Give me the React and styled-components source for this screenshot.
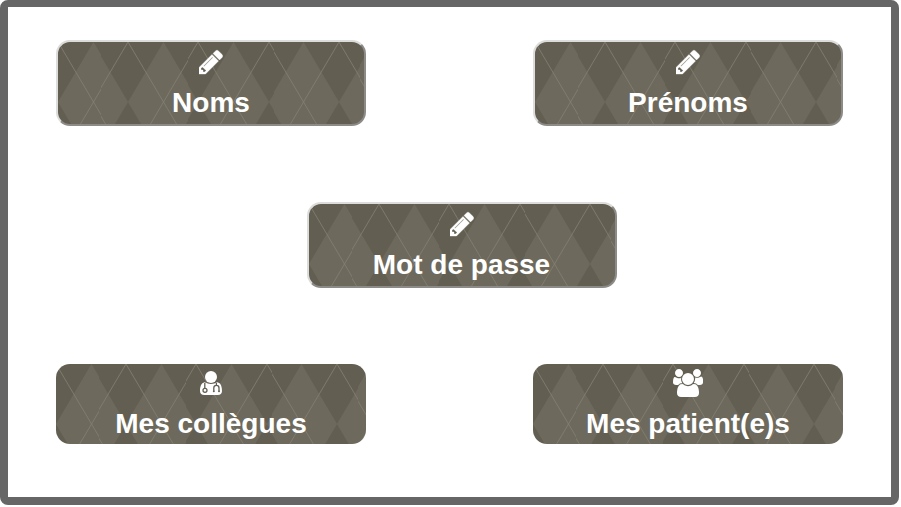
import React from "react";
import styled, { createGlobalStyle, css } from "styled-components";

const argyle = encodeURIComponent(
  `<svg xmlns="http://www.w3.org/2000/svg" width="70.2" height="120" viewBox="0 0 70 120" preserveAspectRatio="none">
    <rect width="70" height="120" fill="#625e52"/>
    <path d="M35 0L70 60L35 120L0 60Z" fill="#6d695c"/>
    <path d="M0 0L70 120M70 0L0 120" stroke="#827e71" stroke-width="0.85" fill="none"/>
  </svg>`
);

const GlobalStyle = createGlobalStyle`
  *, *::before, *::after { box-sizing: border-box; }
  body { margin: 0; background: #fff; overflow: hidden; }
`;

const Frame = styled.main`
  width: 899px;
  height: 505px;
  padding: 33px 48px 0;
  border: 8px solid #666;
  border-top-width: 7px;
  border-radius: 8px;
  background: #fff;
  font-family: "Liberation Sans", Arial, sans-serif;
`;

const Row = styled.div`
  display: flex;
  justify-content: ${(p) => (p.$centered ? "center" : "space-between")};
  margin-bottom: 76px;
  padding-left: ${(p) => (p.$centered ? 24 : 0)}px;
`;

const Tile = styled.button`
  display: flex;
  flex-direction: column;
  align-items: center;
  width: 310px;
  height: 80px;
  margin: 0;
  padding: 5px 0 0;
  border: 0;
  border-radius: 14px;
  background: url("data:image/svg+xml,${argyle}") 0 0 / 70.2px 120px;
  color: #fff;
  font: bold 28px/32px "Liberation Sans", Arial, sans-serif;
  cursor: pointer;

  ${(p) =>
    p.$raised &&
    css`
      height: 86px;
      padding-top: 6px;
      border: 2px solid;
      border-color: #dcdcda #8c8b88 #8c8b88 #dcdcda;
    `}
`;

const Icon = styled.svg`
  display: block;
  flex: none;
  width: ${(p) => p.$width}px;
  height: 28px;
  margin-bottom: 11px;
  fill: currentColor;
`;

const Stethoscope = styled.g`
  fill: none;
  stroke: #625e52;
  stroke-width: 1.3;
`;

const PENCIL =
  "M491 1536l91-91-235-235-91 91v107h128v128h107zm523-928q0-22-22-22-10 0-17 7l-542 542q-7 7-7 17 0 22 22 22 10 0 17-7l542-542q7-7 7-17zm-54-192l416 416-832 832h-416v-416zm683 96q0 53-37 90l-166 166-416-416 166-165q36-38 90-38 53 0 91 38l235 234q37 39 37 91z";

const GROUP =
  "M593 896q-162 5-265 128h-134q-82 0-138-40.5t-56-118.5q0-353 124-353 6 0 43.5 21t97.5 42.5 119 21.5q67 0 133-23-5 37-5 66 0 159 93 288zm1071 637q0 120-73 189.5t-194 69.5h-874q-121 0-194-69.5t-73-189.5q0-53 3.5-103.5t14-109 26.5-108.5 43-97.5 62-81 85.5-53.5 111.5-20q10 0 43 21.5t73 48 107 48 135 21.5 135-21.5 107-48 73-48 43-21.5q61 0 111.5 20t85.5 53.5 62 81 43 97.5 26.5 108.5 14 109 3.5 103.5zm-1024-1277q0 106-75 181t-181 75-181-75-75-181 75-181 181-75 181 75 75 181zm704 384q0 159-112.5 271.5t-271.5 112.5-271.5-112.5-112.5-271.5 112.5-271.5 271.5-112.5 271.5 112.5 112.5 271.5zm576 225q0 78-56 118.5t-138 40.5h-134q-103-123-265-128 93-129 93-288 0-29-5-66 66 23 133 23 59 0 119-21.5t97.5-42.5 43.5-21q124 0 124 353zm-128-609q0 106-75 181t-181 75-181-75-75-181 75-181 181-75 181 75 75 181z";

function PencilIcon() {
  return (
    <Icon $width={24} viewBox="128 0 1536 1792" aria-hidden="true">
      <path d={PENCIL} stroke="currentColor" strokeWidth="24" />
    </Icon>
  );
}

function DoctorIcon() {
  return (
    <Icon $width={22} viewBox="0 0 22 28" aria-hidden="true">
      <circle cx="11" cy="8" r="6" />
      <path d="M4.6 13.3C1 14 0 18 0 22C0 24.6 1.7 26 4.2 26H17.8C20.3 26 22 24.6 22 22C22 18 21 14 17.4 13.3Q14.5 15 11 15Q7.5 15 4.6 13.3Z" />
      <Stethoscope>
        <path d="M4.8 14V19.2M16.4 14V16.4M13.8 21.8V19a2.6 2.6 0 0 1 5.2 0V21.8" />
        <circle cx="5" cy="21.3" r="2" />
      </Stethoscope>
      <circle cx="13.8" cy="22.2" r="1" fill="#625e52" />
      <circle cx="19" cy="22.2" r="1" fill="#625e52" />
    </Icon>
  );
}

function GroupIcon() {
  return (
    <Icon $width={30} viewBox="0 0 1920 1792" aria-hidden="true">
      <path d={GROUP} />
    </Icon>
  );
}

export default function App() {
  return (
    <>
      <GlobalStyle />
      <Frame>
        <Row>
          <Tile $raised>
            <PencilIcon />
            Noms
          </Tile>
          <Tile $raised>
            <PencilIcon />
            Prénoms
          </Tile>
        </Row>
        <Row $centered>
          <Tile $raised>
            <PencilIcon />
            Mot de passe
          </Tile>
        </Row>
        <Row>
          <Tile>
            <DoctorIcon />
            Mes collègues
          </Tile>
          <Tile>
            <GroupIcon />
            Mes patient(e)s
          </Tile>
        </Row>
      </Frame>
    </>
  );
}
